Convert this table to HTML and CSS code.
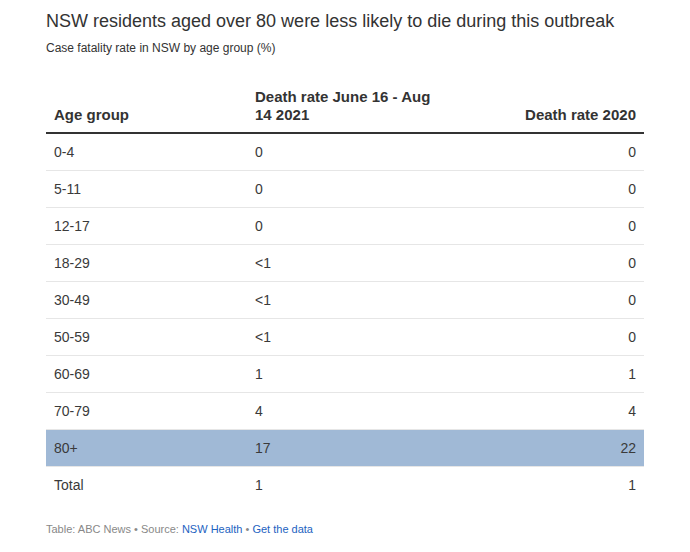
FILE: index.html
```html
<!DOCTYPE html>
<html>
<head>
<meta charset="utf-8">
<link rel="stylesheet" href="styles.css">
</head>
<body>
<div class="chart">
  <h1 class="title">NSW residents aged over 80 were less likely to die during this outbreak</h1>
  <p class="desc">Case fatality rate in NSW by age group (%)</p>
  <table class="tbl">
    <thead>
      <tr>
        <th class="c1">Age group</th>
        <th class="c2">Death rate June 16 - Aug 14 2021</th>
        <th class="c3">Death rate 2020</th>
      </tr>
    </thead>
    <tbody>
      <tr><td class="c1">0-4</td><td class="c2">0</td><td class="c3">0</td></tr>
      <tr><td class="c1">5-11</td><td class="c2">0</td><td class="c3">0</td></tr>
      <tr><td class="c1">12-17</td><td class="c2">0</td><td class="c3">0</td></tr>
      <tr><td class="c1">18-29</td><td class="c2">&lt;1</td><td class="c3">0</td></tr>
      <tr><td class="c1">30-49</td><td class="c2">&lt;1</td><td class="c3">0</td></tr>
      <tr><td class="c1">50-59</td><td class="c2">&lt;1</td><td class="c3">0</td></tr>
      <tr><td class="c1">60-69</td><td class="c2">1</td><td class="c3">1</td></tr>
      <tr><td class="c1">70-79</td><td class="c2">4</td><td class="c3">4</td></tr>
      <tr class="hl"><td class="c1">80+</td><td class="c2">17</td><td class="c3">22</td></tr>
      <tr><td class="c1">Total</td><td class="c2">1</td><td class="c3">1</td></tr>
    </tbody>
  </table>
  <div class="foot">Table: ABC News &bull; Source: <a href="#">NSW Health</a> &bull; <a href="#">Get the data</a></div>
</div>
</body>
</html>
```
FILE: styles.css
```css
html, body {
  margin: 0;
  padding: 0;
  background: #fff;
}
body {
  font-family: "Liberation Sans", Arial, sans-serif;
  color: #333;
}
.chart {
  padding: 10px 46px 0 46px;
}
.title {
  margin: 0;
  font-size: 18px;
  font-weight: 400;
  line-height: 22px;
  color: #333;
}
.desc {
  margin: 9px 0 0 0;
  font-size: 12px;
  line-height: 15px;
  color: #333;
}
.tbl {
  margin-top: 24px;
  width: 598px;
  border-collapse: collapse;
  font-size: 14px;
}
.tbl th {
  font-size: 15px;
  font-weight: 700;
  text-align: left;
  vertical-align: bottom;
  padding: 8px 8px 8px 8px;
  line-height: 18px;
  border-bottom: 2px solid #333;
  color: #333;
}
.tbl td {
  padding: 0 8px;
  height: 36px;
  line-height: 18px;
  border-bottom: 1px solid #e6e6e6;
  color: #3a3a3a;
}
.tbl .c1 { width: 185px; }
.tbl th.c2 { width: 190px; }
.tbl .c3 { text-align: right; }
.tbl tr.hl td {
  background: #a0b9d6;
}
.tbl tbody tr:last-child td {
  border-bottom: none;
}
.foot {
  margin-top: 20px;
  font-size: 11px;
  color: #888;
}
.foot a {
  color: #1d62c1;
  text-decoration: none;
}
```
